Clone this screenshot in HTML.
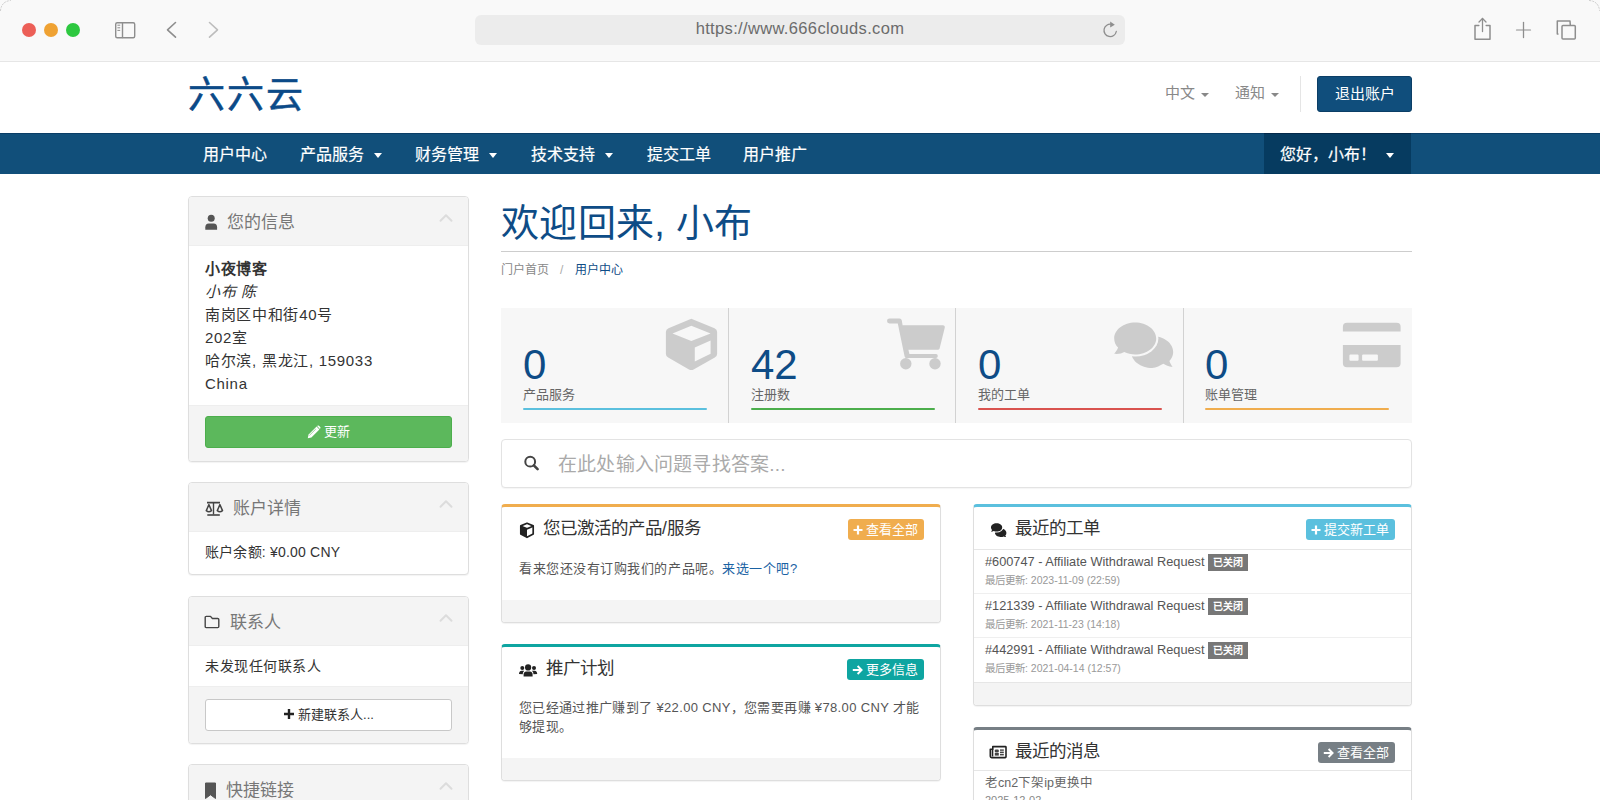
<!DOCTYPE html>
<html lang="zh-CN"><head><meta charset="utf-8">
<style>
*{box-sizing:border-box;margin:0;padding:0}
html,body{width:1600px;height:800px;overflow:hidden;background:#fff;font-family:"Liberation Sans",sans-serif;color:#333}
.abs{position:absolute}
/* browser chrome */
#chrome{position:absolute;left:0;top:0;width:1600px;height:62px;background:#f9f9f9;border-bottom:1px solid #e6e6e6}
.dot{position:absolute;top:23px;width:14px;height:14px;border-radius:50%}
#url{position:absolute;left:475px;top:15px;width:650px;height:30px;background:#ececec;border-radius:6px}
#url span{position:absolute;left:0;right:0;top:4px;text-align:center;font-size:16.5px;color:#6b6b6b;letter-spacing:0.35px}
/* header */
#logo{position:absolute;left:188px;top:70.5px;font-size:37px;line-height:50px;color:#0b4a88;letter-spacing:1.8px;-webkit-text-stroke:0.5px #0b4a88}
.topnav{position:absolute;top:81px;font-size:15px;color:#888;font-family:"Liberation Serif",serif}
.caret{display:inline-block;width:0;height:0;border-left:4px solid transparent;border-right:4px solid transparent;border-top:4px solid #888;vertical-align:middle;margin-left:6px}
#logout{position:absolute;left:1317px;top:76px;width:95px;height:36px;background:#104e7c;border:1px solid #0b3e66;border-radius:3px;color:#fff;font-size:15px;text-align:center;line-height:34px;font-family:"Liberation Serif",serif}
#navbar{position:absolute;left:0;top:133px;width:1600px;height:41px;background:#114f7a;border-top:1px solid #0a3d66}
.nav{position:absolute;top:7px;font-size:16px;color:#fff;-webkit-text-stroke:0.2px #fff}
.nav .caret{border-top-color:#fff;border-left-width:4px;border-right-width:4px;border-top-width:5px;margin-left:10px}
#hello{position:absolute;left:1264px;top:-1px;width:147px;height:41px;background:#063b60;border-top:1px solid #04294a}
/* cards */
.card{position:absolute;background:#fff;border:1px solid #dedede;border-radius:4px;box-shadow:0 1px 1px rgba(0,0,0,.05);overflow:hidden}
.side-h{position:absolute;left:0;top:0;right:0;height:49px;background:#f4f4f4;border-bottom:1px solid #eee}
.side-h .t{position:absolute;left:38px;top:11px;font-size:17px;color:#777}
.side-h .chev{position:absolute;left:250px;top:16px;width:14px;height:10px}
.side-h .ic{position:absolute;left:16px;top:18px}
.side-f{position:absolute;left:0;right:0;bottom:0;background:#f4f4f4;border-top:1px solid #eee}
.btn-green{position:absolute;left:16px;right:16px;background:#5cb85c;border:1px solid #4cae4c;border-radius:3px;color:#fff;font-size:13px;text-align:center}
.tile{position:absolute;top:308px;height:115px}
.tile .n{position:absolute;left:22px;top:33px;font-size:42px;color:#0e4c86}
.tile .l{position:absolute;left:22px;top:76px;font-size:13px;color:#666}
.tile .bar{position:absolute;left:22px;width:184px;top:99.5px;height:2.5px;border-radius:1.5px}
.mcard-h{position:absolute;left:0;right:0;top:0;height:44px}
.mcard-h .t{position:absolute;left:41px;top:7px;font-size:17.5px;color:#333}
.lbl{position:absolute;right:16px;top:12px;height:21px;border-radius:3px;color:#fff;font-size:13px;line-height:21px;padding:0 6px 0 5px}
.mfoot{position:absolute;left:0;right:0;bottom:0;height:22px;background:#f4f4f4}
.tk{position:absolute;left:0;right:0;height:44px;border-bottom:1px solid #efefef}
.tk .a{position:absolute;left:11px;top:4px;font-size:12.75px;color:#555;white-space:nowrap}
.tk .bd{display:inline-block;margin-left:4px;background:#777;color:#fff;font-size:10px;height:17px;line-height:17px;padding:0 5px;vertical-align:0;letter-spacing:0;font-weight:bold}
.tk .u{position:absolute;left:11px;top:22px;font-size:10.5px;color:#999}
</style></head><body>

<div id="chrome">
  <div class="dot" style="left:22px;background:#ec5f57"></div>
  <div class="dot" style="left:44px;background:#efa233"></div>
  <div class="dot" style="left:66px;background:#2dc840"></div>
  <div id="url"><span>https://www.666clouds.com</span></div>
  <svg class="abs" style="left:0;top:0" width="1600" height="62" viewBox="0 0 1600 62" fill="none" stroke="#8e8e8e" stroke-width="1.4" stroke-linecap="round" stroke-linejoin="round">
    <path d="M0.5,10.5 Q1.5,1.5 10.5,0.5" stroke="#b8b8b8" stroke-width="1" stroke-dasharray="1.2 1.8" opacity="0.7"/>
    <path d="M1589.5,0.5 Q1598.5,1.5 1599.5,10.5" stroke="#b8b8b8" stroke-width="1" stroke-dasharray="1.2 1.8" opacity="0.7"/>
    <rect x="115.7" y="22.7" width="19" height="15" rx="1.5"/>
    <line x1="122.5" y1="23" x2="122.5" y2="37.5"/>
    <line x1="117.8" y1="25.2" x2="119.8" y2="25.2" stroke-width="1"/>
    <line x1="117.8" y1="27.8" x2="119.8" y2="27.8" stroke-width="1"/>
    <line x1="117.8" y1="30.4" x2="119.8" y2="30.4" stroke-width="1"/>
    <polyline points="175.5,22.5 167.5,29.8 175.5,37.2" stroke-width="1.6"/>
    <polyline points="209.5,22.5 217.5,29.8 209.5,37.2" stroke="#bdbdbd" stroke-width="1.6"/>
    <path d="M1116.3,31.5 A6.2,6.2 0 1 1 1111.5,24.3" stroke-width="1.3"/>
    <path d="M1110.2,21.5 L1114.8,24.8 L1110.2,27.6 Z" fill="#8e8e8e" stroke="none"/>
    <path d="M1478.8,25.5 L1475,25.5 L1475,39.2 L1490,39.2 L1490,25.5 L1486.2,25.5" stroke-width="1.5"/>
    <line x1="1482.5" y1="18.5" x2="1482.5" y2="31.5" stroke-width="1.3"/>
    <polyline points="1479,22 1482.5,18.5 1486,22" stroke-width="1.3"/>
    <line x1="1523.5" y1="22.5" x2="1523.5" y2="37.5" stroke-width="1.3"/>
    <line x1="1516.5" y1="30" x2="1530.5" y2="30" stroke-width="1.2"/>
    <path d="M1558,34 L1557.3,34 L1557.3,21 L1570,21 L1570.3,25" stroke-width="1.5"/>
    <rect x="1562" y="25.5" width="13.3" height="13.5" rx="1" stroke-width="1.5"/>
  </svg>
</div>

<div id="logo">六六云</div>
<div class="topnav" style="left:1165px">中文<span class="caret"></span></div>
<div class="topnav" style="left:1235px">通知<span class="caret"></span></div>
<div class="abs" style="left:1300px;top:76px;width:1px;height:36px;background:#e5e5e5"></div>
<div id="logout">退出账户</div>

<div id="navbar">
  <div class="nav" style="left:203px">用户中心</div>
  <div class="nav" style="left:300px">产品服务<span class="caret"></span></div>
  <div class="nav" style="left:415px">财务管理<span class="caret"></span></div>
  <div class="nav" style="left:531px">技术支持<span class="caret"></span></div>
  <div class="nav" style="left:647px">提交工单</div>
  <div class="nav" style="left:743px">用户推广</div>
  <div id="hello"><div class="nav" style="left:16px">您好，小布！<span class="caret"></span></div></div>
</div>

<!-- sidebar -->
<div class="card" style="left:188px;top:196px;width:281px;height:266px">
  <div class="side-h"><svg class="ic" width="16" height="16" viewBox="0 0 16 16" style="left:15px;top:17px"><circle cx="7.2" cy="4.3" r="3.5" fill="#555"/><path d="M1.3,15.8 L1.3,13.2 Q1.3,9.6 4.8,9.4 L9.6,9.4 Q13.1,9.6 13.1,13.2 L13.1,15.8 Z" fill="#555"/></svg><div class="t">您的信息</div><svg class="chev" viewBox="0 0 14 10"><polyline points="1.5,7.8 7,2.2 12.5,7.8" fill="none" stroke="#dcdcdc" stroke-width="2" stroke-linecap="round" stroke-linejoin="round"/></svg></div>
  <div class="abs" style="left:16px;top:60px;font-size:15px;line-height:23px;color:#333;letter-spacing:0.7px">
    <b>小夜博客</b><br><i>小布 陈</i><br>南岗区中和街40号<br>202室<br>哈尔滨, 黑龙江, 159033<br>China
  </div>
  <div class="side-f" style="height:56px"><div class="btn-green" style="top:10px;height:32px;line-height:30px"><svg width="14" height="14" viewBox="0 0 14 14" style="vertical-align:-3px;margin-right:3px"><path d="M0.8,13.2 L1.6,9.6 L9.6,1.6 L12.4,4.4 L4.4,12.4 Z" fill="#fff"/><path d="M10.4,0.8 Q11.2,0 12,0.8 L13.2,2 Q14,2.8 13.2,3.6 L12.9,3.9 L10.1,1.1 Z" fill="#fff"/><line x1="2.4" y1="10.4" x2="8.8" y2="4" stroke="#5cb85c" stroke-width="0.6"/></svg>更新</div></div>
</div>

<div class="card" style="left:188px;top:482px;width:281px;height:93px">
  <div class="side-h"><svg class="ic" width="20" height="16" viewBox="0 0 20 16" style="left:15px;top:18px"><g fill="none" stroke="#444" stroke-width="1.5" stroke-linejoin="round"><line x1="3" y1="1.6" x2="16" y2="1.6" stroke-width="1.6"/><line x1="9.5" y1="1" x2="9.5" y2="13.5" stroke-width="1.4"/><line x1="3.3" y1="14" x2="15.8" y2="14" stroke-width="1.6"/><path d="M2.3,9.6 L4.9,3.6 L7.5,9.6 Q4.9,11.8 2.3,9.6 Z"/><path d="M13.3,9.6 L15.9,3.6 L18.5,9.6 Q15.9,11.8 13.3,9.6 Z"/></g></svg><div class="t" style="left:44px">账户详情</div><svg class="chev" viewBox="0 0 14 10"><polyline points="1.5,7.8 7,2.2 12.5,7.8" fill="none" stroke="#dcdcdc" stroke-width="2" stroke-linecap="round" stroke-linejoin="round"/></svg></div>
  <div class="abs" style="left:16px;top:58px;font-size:14px;color:#333;letter-spacing:0.2px">账户余额: ¥0.00 CNY</div>
</div>

<div class="card" style="left:188px;top:596px;width:281px;height:148px">
  <div class="side-h"><svg class="ic" width="18" height="14" viewBox="0 0 18 14" style="left:15px;top:18px"><path d="M1.2,2.4 Q1.2,1.4 2.2,1.4 L6.5,1.4 L8.4,3.5 L13.8,3.5 Q14.8,3.5 14.8,4.5 L14.8,11.6 Q14.8,12.6 13.8,12.6 L2.2,12.6 Q1.2,12.6 1.2,11.6 Z" fill="none" stroke="#444" stroke-width="1.4" stroke-linejoin="round"/></svg><div class="t" style="left:41px">联系人</div><svg class="chev" viewBox="0 0 14 10"><polyline points="1.5,7.8 7,2.2 12.5,7.8" fill="none" stroke="#dcdcdc" stroke-width="2" stroke-linecap="round" stroke-linejoin="round"/></svg></div>
  <div class="abs" style="left:16px;top:58px;font-size:14px;color:#333;letter-spacing:0.5px">未发现任何联系人</div>
  <div class="side-f" style="height:57px"><div class="abs" style="left:16px;right:16px;top:12px;height:32px;border:1px solid #c8c8c8;border-radius:3px;background:#fff;text-align:center;line-height:30px;font-size:13px;color:#333"><svg width="12" height="12" viewBox="0 0 12 12" style="vertical-align:-1px;margin-right:3px"><path d="M6,1 L6,11 M1,6 L11,6" stroke="#222" stroke-width="2.4"/></svg>新建联系人...</div></div>
</div>

<div class="card" style="left:188px;top:764px;width:281px;height:60px">
  <div class="side-h"><svg class="ic" width="14" height="18" viewBox="0 0 14 18" style="left:15px;top:17px"><path d="M1.5,1 L11.5,1 L11.5,16.5 L6.5,12.8 L1.5,16.5 Z" fill="#555" stroke="#555" stroke-width="1" stroke-linejoin="round"/></svg><div class="t" style="left:37px">快捷链接</div><svg class="chev" viewBox="0 0 14 10"><polyline points="1.5,7.8 7,2.2 12.5,7.8" fill="none" stroke="#dcdcdc" stroke-width="2" stroke-linecap="round" stroke-linejoin="round"/></svg></div>
</div>

<!-- main -->
<div class="abs" style="left:501px;top:192px;font-size:38px;color:#0e4c86;letter-spacing:0.3px">欢迎回来, 小布</div>
<div class="abs" style="left:501px;top:251px;width:911px;height:1px;background:#cdcdcd"></div>
<div class="abs" style="left:501px;top:260px;font-size:12px;color:#888">门户首页<span style="margin:0 12px 0 11px;color:#aaa">/</span><span style="color:#0e4c86">用户中心</span></div>

<div class="abs" style="left:501px;top:308px;width:911px;height:115px;background:#f7f7f7"></div>
<div class="abs" style="left:728px;top:308px;width:1px;height:115px;background:#d2d2d2"></div>
<div class="abs" style="left:955px;top:308px;width:1px;height:115px;background:#d2d2d2"></div>
<div class="abs" style="left:1183px;top:308px;width:1px;height:115px;background:#d2d2d2"></div>
<div class="tile" style="left:501px;width:227px"><div class="n">0</div><div class="l">产品服务</div><div class="bar" style="background:#5bc0de"></div>
 <svg class="abs" style="left:154px;top:2px" width="70" height="70" viewBox="0 0 70 70"><path d="M36.3,8.8 L59.5,18.2 Q62.1,19.3 62.1,22 L62.1,44 Q62.1,46.4 59.8,47.5 L38.6,59.4 Q36.3,60.6 34,59.4 L13.2,47.5 Q10.9,46.4 10.9,44 L10.9,22 Q10.9,19.3 13.5,18.2 Z M17.5,23.6 L36.3,31.1 L55.6,23.6 L36.3,15.8 Z M39.8,37.6 L39.8,51.6 L55.6,43.8 L55.6,30.6 Z" fill="#cccccc" fill-rule="evenodd"/></svg></div>
<div class="tile" style="left:729px;width:227px"><div class="n">42</div><div class="l">注册数</div><div class="bar" style="background:#4cae4c"></div>
 <svg class="abs" style="left:151px;top:1px" width="70" height="70" viewBox="0 0 70 70"><g fill="#cccccc"><path d="M9.5,9.6 L19.5,9.6 Q21.4,9.6 21.8,11.5 L22.6,16.2 L63.2,16.2 Q65.2,16.4 64.8,18.4 L59.6,39.4 Q59.2,40.7 57.8,40.7 L28.4,40.7 L29.4,45 L56,45 Q57.8,45 57.8,47 Q57.8,49 56,49 L26.5,49 Q25,49 24.6,47.5 L17.8,14.4 L9.5,14.4 Q7,14.4 7,12 Q7,9.6 9.5,9.6 Z"/><circle cx="25.8" cy="54.7" r="5.7"/><circle cx="55" cy="54.7" r="5.7"/></g></svg></div>
<div class="tile" style="left:956px;width:227px"><div class="n">0</div><div class="l">我的工单</div><div class="bar" style="background:#d9534f"></div>
 <svg class="abs" style="left:149px;top:2px" width="70" height="70" viewBox="0 0 70 70"><g fill="#cccccc"><path d="M47.2,26 C58.8,26 68.2,33.2 68.2,42 C68.2,45.4 66.8,48.5 64.4,51.1 C65.2,53.6 66.6,55.6 67.6,56.9 C63.6,56.7 60.6,55.3 58.4,53.8 C55.2,55.2 51.3,58 47.2,58 C35.6,58 26.2,50.8 26.2,42 C26.2,33.2 35.6,26 47.2,26 Z"/><ellipse cx="30.2" cy="28.4" rx="23.2" ry="18.2" fill="#f7f7f7"/><path d="M30.2,12.4 C41.8,12.4 51.2,19.6 51.2,28.4 C51.2,37.2 41.8,44.4 30.2,44.4 C26.2,44.4 22.5,43.5 19.2,42 C16.8,43.6 13.3,44.2 9.2,43.8 C10.8,42 12.3,39.9 13.1,37.6 C10.6,35 9.2,31.8 9.2,28.4 C9.2,19.6 18.6,12.4 30.2,12.4 Z"/></g></svg></div>
<div class="tile" style="left:1183px;width:229px"><div class="n">0</div><div class="l">账单管理</div><div class="bar" style="background:#f0ad4e"></div>
 <svg class="abs" style="left:152px;top:2px" width="70" height="70" viewBox="0 0 70 70"><g fill="#cccccc"><path d="M12,12.7 L61.6,12.7 Q65.6,12.7 65.6,16.7 L65.6,21.4 L7.9,21.4 L7.9,16.7 Q7.9,12.7 12,12.7 Z"/><path d="M7.9,35 L65.6,35 L65.6,53.3 Q65.6,57.3 61.6,57.3 L12,57.3 Q7.9,57.3 7.9,53.3 Z M15.4,44.6 Q14.4,44.6 14.4,45.6 L14.4,49.7 Q14.4,50.7 15.4,50.7 L22.6,50.7 Q23.6,50.7 23.6,49.7 L23.6,45.6 Q23.6,44.6 22.6,44.6 Z M28.1,44.6 Q27.1,44.6 27.1,45.6 L27.1,49.7 Q27.1,50.7 28.1,50.7 L41.9,50.7 Q42.9,50.7 42.9,49.7 L42.9,45.6 Q42.9,44.6 41.9,44.6 Z" fill-rule="evenodd"/></g></svg></div>

<div class="abs" style="left:501px;top:439px;width:911px;height:49px;border:1px solid #e3e3e3;border-radius:4px;background:#fff;box-shadow:0 1px 1px rgba(0,0,0,.04)">
  <svg class="abs" style="left:20px;top:13px" width="20" height="20" viewBox="0 0 20 20"><circle cx="8.2" cy="8.7" r="4.9" fill="none" stroke="#444" stroke-width="2"/><line x1="11.8" y1="12.4" x2="15.6" y2="16.2" stroke="#444" stroke-width="2.6" stroke-linecap="round"/></svg>
  <div class="abs" style="left:56px;top:9px;font-size:19px;color:#aaa;letter-spacing:0.2px">在此处输入问题寻找答案...</div>
</div>

<div class="card" style="left:501px;top:504px;width:440px;height:119px;border-top:3px solid #f0ad4e">
  <div class="mcard-h">
    <svg class="abs" style="left:16px;top:14px" width="18" height="18" viewBox="0 0 18 18"><path d="M9,2.3 L15.2,4.9 L15.2,13.1 L9,16.3 L2.8,13.1 L2.8,4.9 Z" fill="#fff" stroke="#222" stroke-width="1.7" stroke-linejoin="round"/><path d="M2.9,5.2 L9,7.9 L15.1,5.2" fill="none" stroke="#222" stroke-width="1.7"/><path d="M2.8,5.2 L9,7.9 L9,16.2 L2.8,13.1 Z" fill="#222"/></svg>
    <div class="t">您已激活的产品/服务</div>
    <div class="lbl" style="background:#f0ad4e"><svg width="10" height="10" viewBox="0 0 10 10" style="vertical-align:-0.5px;margin-right:3px"><path d="M5,0.5 L5,9.5 M0.5,5 L9.5,5" stroke="#fff" stroke-width="2.2"/></svg>查看全部</div>
  </div>
  <div class="abs" style="left:17px;top:51px;font-size:13px;color:#555;letter-spacing:0.55px">看来您还没有订购我们的产品呢。<span style="color:#1a62a3">来选一个吧?</span></div>
  <div class="mfoot"></div>
</div>

<div class="card" style="left:501px;top:644px;width:440px;height:137px;border-top:3px solid #0ea5a1">
  <div class="mcard-h">
    <svg class="abs" style="left:16px;top:13px" width="20" height="18" viewBox="0 0 20 18"><g fill="#222"><circle cx="10.1" cy="7.4" r="3.1"/><path d="M5.6,16.6 L5.6,14.8 Q5.6,11.8 8.2,11.6 L12,11.6 Q14.6,11.8 14.6,14.8 L14.6,16.6 Z"/><circle cx="4.3" cy="8" r="2"/><circle cx="16" cy="8" r="2"/><path d="M1,14 Q1,11 3.6,10.8 L6.2,10.8 Q4.6,12.4 4.7,14.3 Z"/><path d="M19.2,14 Q19.2,11 16.6,10.8 L14,10.8 Q15.6,12.4 15.5,14.3 Z"/></g></svg>
    <div class="t" style="left:44px">推广计划</div>
    <div class="lbl" style="background:#0ea5a1"><svg width="11" height="10" viewBox="0 0 11 10" style="vertical-align:-0.5px;margin-right:3px"><path d="M0.8,5 L9.5,5 M5.6,1 L9.6,5 L5.6,9" fill="none" stroke="#fff" stroke-width="1.9"/></svg>更多信息</div>
  </div>
  <div class="abs" style="left:17px;top:52px;width:410px;font-size:13px;line-height:18.5px;color:#555;letter-spacing:0.35px">您已经通过推广赚到了 ¥22.00 CNY，您需要再赚 ¥78.00 CNY 才能够提现。</div>
  <div class="mfoot"></div>
</div>

<div class="card" style="left:973px;top:504px;width:439px;height:202px;border-top:3px solid #5bc0de">
  <div class="mcard-h" style="height:43px;border-bottom:1px solid #e6e6e6">
    <svg class="abs" style="left:15px;top:14px" width="18" height="16" viewBox="0 0 18 16"><g fill="#222"><path d="M11.6,7.6 C15,7.6 17.4,9.6 17.4,12 C17.4,13 17,13.9 16.3,14.6 C16.6,15.4 17,15.9 17.3,16.3 C16.2,16.2 15.4,15.8 14.8,15.4 C13.9,15.8 12.8,16 11.6,16 C8.4,16 5.9,14 5.9,11.8 Z"/><ellipse cx="7.6" cy="6.4" rx="6.8" ry="5.2" fill="#fff"/><path d="M7.6,2.2 C10.8,2.2 13.2,4.1 13.2,6.4 C13.2,8.7 10.8,10.6 7.6,10.6 C6.6,10.6 5.6,10.4 4.8,10 C4,10.6 3,10.8 1.9,10.8 C2.4,10.2 2.8,9.6 3,8.9 C2.3,8.2 2,7.3 2,6.4 C2,4.1 4.4,2.2 7.6,2.2 Z"/></g></svg>
    <div class="t" style="left:41px">最近的工单</div>
    <div class="lbl" style="background:#5bc0de"><svg width="10" height="10" viewBox="0 0 10 10" style="vertical-align:-0.5px;margin-right:3px"><path d="M5,0.5 L5,9.5 M0.5,5 L9.5,5" stroke="#fff" stroke-width="2.2"/></svg>提交新工单</div>
  </div>
  <div class="tk" style="top:43px"><div class="a">#600747 - Affiliate Withdrawal Request<span class="bd">已关闭</span></div><div class="u">最后更新: 2023-11-09 (22:59)</div></div>
  <div class="tk" style="top:87px"><div class="a">#121339 - Affiliate Withdrawal Request<span class="bd">已关闭</span></div><div class="u">最后更新: 2021-11-23 (14:18)</div></div>
  <div class="tk" style="top:131px;height:45px;border-bottom:1px solid #e6e6e6"><div class="a">#442991 - Affiliate Withdrawal Request<span class="bd">已关闭</span></div><div class="u">最后更新: 2021-04-14 (12:57)</div></div>
  <div class="mfoot"></div>
</div>

<div class="card" style="left:973px;top:727px;width:439px;height:100px;border-top:3px solid #777f85">
  <div class="mcard-h" style="height:41px;border-bottom:1px solid #e6e6e6">
    <svg class="abs" style="left:15px;top:15px" width="18" height="14" viewBox="0 0 18 14"><path d="M3.8,1.6 L16.4,1.6 Q17,1.6 17,2.2 L17,11.8 Q17,12.6 16.2,12.6 L2.6,12.6 Q1.3,12.6 1.3,11.3 L1.3,4.2 L3.8,4.2 Z" fill="none" stroke="#222" stroke-width="1.6" stroke-linejoin="round"/><line x1="3.5" y1="4" x2="3.5" y2="11.6" stroke="#222" stroke-width="1.6"/><g fill="#444"><rect x="5.8" y="4.4" width="4" height="3.2" rx="1"/><rect x="5.8" y="8" width="4" height="2.6"/><rect x="11" y="4.4" width="3.8" height="1.4"/><rect x="11" y="6.6" width="3.8" height="1.4"/><rect x="11" y="8.8" width="3.8" height="1.6"/></g></svg>
    <div class="t" style="left:41px">最近的消息</div>
    <div class="lbl" style="background:#777f85"><svg width="11" height="10" viewBox="0 0 11 10" style="vertical-align:-0.5px;margin-right:3px"><path d="M0.8,5 L9.5,5 M5.6,1 L9.6,5 L5.6,9" fill="none" stroke="#fff" stroke-width="1.9"/></svg>查看全部</div>
  </div>
  <div class="abs" style="left:11px;top:45px;font-size:12.5px;line-height:17px;color:#666">老cn2下架ip更换中<br><span style="font-size:11px;color:#888">2025-12-02</span></div>
</div>

</body></html>
